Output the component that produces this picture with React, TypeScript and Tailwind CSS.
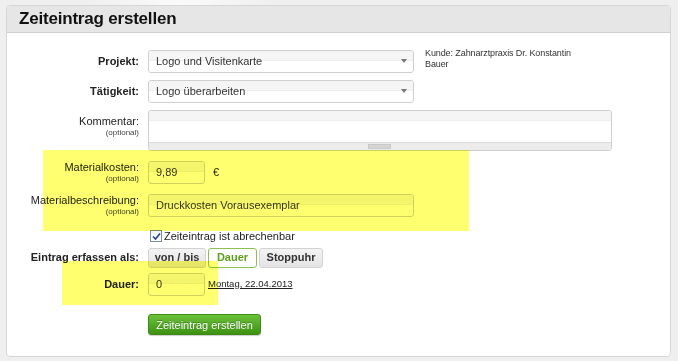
import React from 'react';

const font = { fontFamily: '"Liberation Sans", Arial, sans-serif' };

function Label({ text, optional, bold }: { text: string; optional?: boolean; bold?: boolean }) {
  return (
    <div className="w-[132px] shrink-0 text-right leading-none">
      <div className={`text-[11px] text-[#222] ${bold ? 'font-bold' : ''}`}>{text}</div>
      {optional && <div className="mt-[2px] text-[8px] text-[#444]">(optional)</div>}
    </div>
  );
}

function Field({ value, width, select }: { value: string; width: string; select?: boolean }) {
  return (
    <div
      className={`relative ml-[9px] h-[23px] ${width} shrink-0 rounded-[3px] border border-[#cfcfcf] bg-white flex items-center overflow-hidden`}
    >
      <div className="absolute left-0 right-0 top-0 h-[10px] bg-[#f5f5f5] border-b border-[#eeeeee]" />
      <span className="relative pl-[7px] text-[11px] text-[#333]">{value}</span>
      {select && (
        <span className="absolute right-[6px] top-[8px] h-0 w-0 border-l-[3px] border-r-[3px] border-t-[4px] border-l-transparent border-r-transparent border-t-[#777]" />
      )}
    </div>
  );
}

export default function App() {
  return (
    <div className="relative w-[678px] h-[361px] overflow-hidden bg-[#efefef]" style={font}>
      <div className="absolute left-[80px] top-0 h-[5px] w-[200px] bg-gradient-to-r from-transparent via-white to-transparent opacity-70" />
      <div className="ml-[6px] pt-[5px]">
        <div className="w-[665px] h-[352px] rounded-[4px] border border-[#d6d6d6] bg-white overflow-hidden">
          <div className="h-[27px] bg-[#e6e6e6] border-b border-[#cfcfcf] flex items-center pl-[12px]">
            <h1 className="text-[17px] font-bold text-[#111] tracking-[-0.2px]">Zeiteintrag erstellen</h1>
          </div>

          <div className="pt-[17px]">
            {/* Projekt */}
            <div className="flex items-center">
              <Label text="Projekt:" bold />
              <Field value="Logo und Visitenkarte" width="w-[266px]" select />
              <div className="ml-[11px] text-[9px] leading-[11px] text-[#333] -mt-[6px] tracking-[-0.1px]">
                Kunde: Zahnarztpraxis Dr. Konstantin
                <br />
                Bauer
              </div>
            </div>

            {/* Tätigkeit */}
            <div className="flex items-center mt-[7px]">
              <Label text="Tätigkeit:" bold />
              <Field value="Logo überarbeiten" width="w-[266px]" select />
            </div>

            {/* Kommentar */}
            <div className="flex items-start mt-[7px]">
              <div className="pt-[6px]">
                <Label text="Kommentar:" optional />
              </div>
              <div className="ml-[9px] h-[41px] w-[464px] rounded-[3px] border border-[#cfcfcf] bg-white flex flex-col overflow-hidden">
                <div className="h-[10px] bg-[#f5f5f5] border-b border-[#eeeeee]" />
                <div className="flex-1" />
                <div className="h-[8px] bg-[#ececec] border-t border-[#dcdcdc] relative">
                  <div className="absolute left-[219px] top-[1px] h-[5px] w-[23px] bg-[#d4d4d4] border border-[#c8c8c8]" />
                </div>
              </div>
            </div>

            {/* Materialkosten */}
            <div className="flex items-center mt-[10px]">
              <Label text="Materialkosten:" optional />
              <Field value="9,89" width="w-[57px]" />
              <span className="ml-[8px] text-[11px] text-[#222]">€</span>
            </div>

            {/* Materialbeschreibung */}
            <div className="flex items-center mt-[10px]">
              <Label text="Materialbeschreibung:" optional />
              <Field value="Druckkosten Vorausexemplar" width="w-[266px]" />
            </div>

            {/* Checkbox */}
            <div className="flex items-center mt-[11px] ml-[143px]">
              <span className="h-[12px] w-[12px] border border-[#7a8ea8] bg-gradient-to-b from-[#eef2f8] to-white flex items-center justify-center">
                <svg width="9" height="9" viewBox="0 0 9 9">
                  <path d="M1 4.5 L3.5 7 L8 1.5" fill="none" stroke="#2a3f8f" strokeWidth="1.6" />
                </svg>
              </span>
              <span className="ml-[2px] text-[11px] text-[#222]">Zeiteintrag ist abrechenbar</span>
            </div>

            {/* Eintrag erfassen als */}
            <div className="flex items-center mt-[3px]">
              <Label text="Eintrag erfassen als:" bold />
              <div className="ml-[9px] flex gap-[2px]">
                <span className="h-[20px] w-[58px] rounded-[3px] border border-[#d2d2d2] bg-gradient-to-b from-[#f4f4f4] to-[#e4e4e4] flex items-center justify-center text-[11px] font-bold text-[#333]">
                  von / bis
                </span>
                <span className="h-[20px] w-[49px] rounded-[3px] border border-[#8cc152] bg-white flex items-center justify-center text-[11px] font-bold text-[#5c9e1e]">
                  Dauer
                </span>
                <span className="h-[20px] w-[64px] rounded-[3px] border border-[#d2d2d2] bg-gradient-to-b from-[#f4f4f4] to-[#e4e4e4] flex items-center justify-center text-[11px] font-bold text-[#333]">
                  Stoppuhr
                </span>
              </div>
            </div>

            {/* Dauer */}
            <div className="flex items-center mt-[5px]">
              <Label text="Dauer:" bold />
              <Field value=" 0" width="w-[57px]" />
              <span className="ml-[3px] text-[9.5px] text-[#222] underline">Montag, 22.04.2013</span>
            </div>

            {/* Submit */}
            <div className="mt-[16px] ml-[141px]">
              <button className="h-[21px] w-[113px] rounded-[3px] border border-[#3d8a12] bg-gradient-to-b from-[#6cc23a] to-[#3d9212] text-[11px] text-white shadow-[0_1px_1px_rgba(0,0,0,0.2)] [text-shadow:0_-1px_0_rgba(0,0,0,0.25)]">
                Zeiteintrag erstellen
              </button>
            </div>
          </div>
        </div>
      </div>

      {/* highlight annotations */}
      <div className="absolute left-[43px] top-[150px] h-[81px] w-[426px] bg-[#ffff70] mix-blend-multiply pointer-events-none" />
      <div className="absolute left-[62px] top-[261px] h-[44px] w-[156px] bg-[#ffff70] mix-blend-multiply pointer-events-none" />
    </div>
  );
}
